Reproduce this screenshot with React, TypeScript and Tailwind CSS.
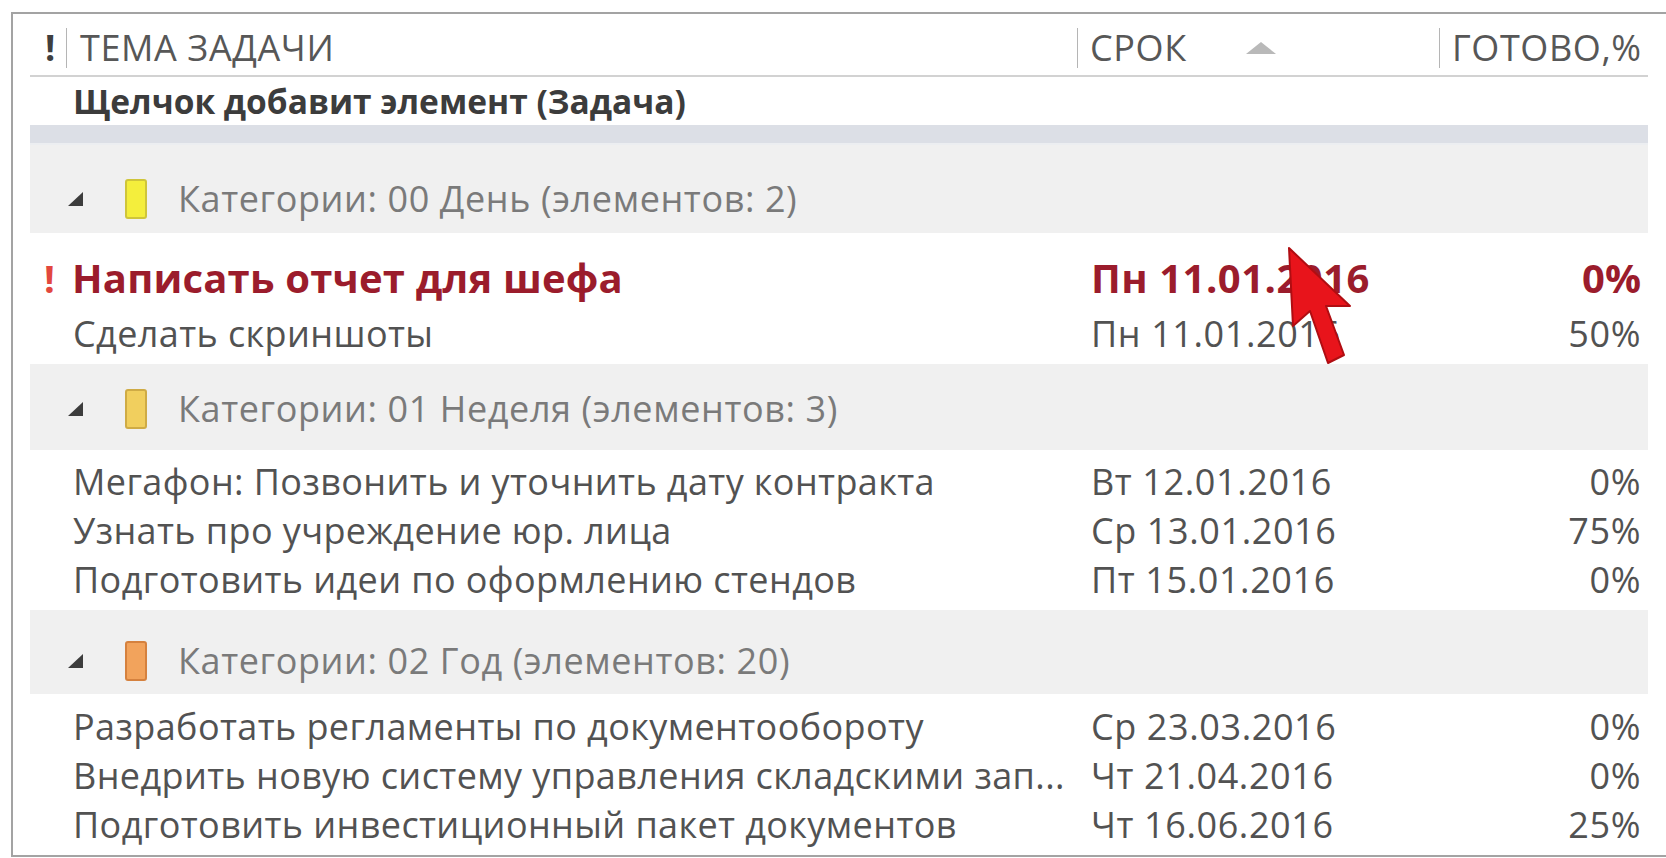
import React from "react";

type Task = { subject: string; due: string; done: string };

const groupDay: Task[] = [{ subject: "Сделать скриншоты", due: "Пн 11.01.2016", done: "50%" }];

const groupWeek: Task[] = [
  { subject: "Мегафон: Позвонить и уточнить дату контракта", due: "Вт 12.01.2016", done: "0%" },
  { subject: "Узнать про учреждение юр. лица", due: "Ср 13.01.2016", done: "75%" },
  { subject: "Подготовить идеи по оформлению стендов", due: "Пт 15.01.2016", done: "0%" },
];

const groupYear: Task[] = [
  { subject: "Разработать регламенты по документообороту", due: "Ср 23.03.2016", done: "0%" },
  { subject: "Внедрить новую систему управления складскими зап...", due: "Чт 21.04.2016", done: "0%" },
  { subject: "Подготовить инвестиционный пакет документов", due: "Чт 16.06.2016", done: "25%" },
];

function Collapse() {
  return (
    <svg width="18" height="18" viewBox="0 0 18 18" className="shrink-0">
      <polygon points="17,2 17,16 2,16" fill="#3c3c3c" />
    </svg>
  );
}

function GroupHeader({
  label,
  swatch,
  border,
  box,
}: {
  label: string;
  swatch: string;
  border: string;
  box: string;
}) {
  return (
    <div className={`ml-[17px] w-[1618px] bg-[#f0f0f0] flex items-end ${box}`}>
      <div className="flex items-center h-[49px]">
        <div className="ml-[36px]">
          <Collapse />
        </div>
        <div
          className="ml-[41px] w-[22px] h-[40px] rounded-[3px] border-2"
          style={{ backgroundColor: swatch, borderColor: border }}
        />
        <span className="ml-[31px] text-[36px] tracking-[0.6px] leading-[49px] text-[#7a7a7a] whitespace-nowrap">
          {label}
        </span>
      </div>
    </div>
  );
}

function TaskRow({ t }: { t: Task }) {
  return (
    <div className="flex items-center h-[49px] text-[36px] tracking-[0.6px] leading-[49px] text-[#525252] whitespace-nowrap">
      <div className="w-[53px] shrink-0" />
      <div className="w-[1011px] shrink-0 pl-[7px] tracking-[0.4px]">{t.subject}</div>
      <div className="w-[362px] shrink-0 pl-[14px]">{t.due}</div>
      <div className="w-[209px] shrink-0 pr-[7px] text-right">{t.done}</div>
    </div>
  );
}

export default function App() {
  return (
    <div className="w-[1666px] h-[858px] bg-white overflow-hidden font-['Open_Sans','Noto_Sans',sans-serif] relative">
      <div className="ml-[11px] mt-[12px] h-[845px] border-l-2 border-t-2 border-b-2 border-[#a3a3a3]">
        {/* column headers */}
        <div className="h-[61px] pt-[6px] flex items-center text-[36px] tracking-[0.6px] leading-[49px] text-[#575757] whitespace-nowrap">
          <div className="w-[53px] shrink-0 pl-[32px] font-bold text-[#3f3f3f]">!</div>
          <div className="w-[1011px] shrink-0 flex items-center">
            <div className="w-px h-[40px] bg-[#b5b5b5]" />
            <span className="ml-[13px]">ТЕМА ЗАДАЧИ</span>
          </div>
          <div className="w-[362px] shrink-0 flex items-center">
            <div className="w-px h-[40px] bg-[#b5b5b5]" />
            <span className="ml-[12px] w-[156px]">СРОК</span>
            <svg width="30" height="12" viewBox="0 0 30 12">
              <polygon points="15,0 30,12 0,12" fill="#b9b9b9" />
            </svg>
          </div>
          <div className="w-[209px] shrink-0 flex items-center">
            <div className="w-px h-[40px] bg-[#b5b5b5]" />
            <span className="ml-[12px]">ГОТОВО,%</span>
          </div>
        </div>
        <div className="ml-[17px] w-[1618px] h-[2px] bg-[#d2d2d2]" />

        {/* new item prompt */}
        <div className="h-[48px] flex items-center pl-[60px] text-[33.5px] leading-[48px] font-bold text-[#3c3c3c] whitespace-nowrap">
          Щелчок добавит элемент (Задача)
        </div>
        <div className="ml-[17px] w-[1618px] h-[20px] bg-[#dcdfe6] border-b-2 border-[#eceef1]" />

        <GroupHeader
          label="Категории: 00 День (элементов: 2)"
          swatch="#f4ee3c"
          border="#cfc53a"
          box="h-[88px] pb-[10px]"
        />

        {/* overdue high priority task */}
        <div className="flex items-center h-[74px] pt-[16px] whitespace-nowrap font-bold leading-[56px] text-[#9b1c2c]">
          <div className="w-[53px] shrink-0 pl-[31px] text-[38px] text-[#e2473e]">!</div>
          <div className="w-[1011px] shrink-0 pl-[6px] text-[40px] tracking-[0.2px]">Написать отчет для шефа</div>
          <div className="w-[362px] shrink-0 pl-[14px] text-[40px] tracking-[0.5px]">Пн 11.01.2016</div>
          <div className="w-[209px] shrink-0 pr-[7px] text-right text-[40px]">0%</div>
        </div>
        <div className="h-[2px]" />
        {groupDay.map((t) => (
          <TaskRow key={t.subject} t={t} />
        ))}
        <div className="h-[6px]" />

        <GroupHeader
          label="Категории: 01 Неделя (элементов: 3)"
          swatch="#f1cf5e"
          border="#cfab45"
          box="h-[86px] pb-[17px]"
        />
        <div className="h-[7px]" />
        {groupWeek.map((t) => (
          <TaskRow key={t.subject} t={t} />
        ))}
        <div className="h-[6px]" />

        <GroupHeader
          label="Категории: 02 Год (элементов: 20)"
          swatch="#f2a35c"
          border="#d5813e"
          box="h-[84px] pb-[9px]"
        />
        <div className="h-[8px]" />
        {groupYear.map((t) => (
          <TaskRow key={t.subject} t={t} />
        ))}
      </div>

      {/* mouse pointer */}
      <svg
        width="66"
        height="124"
        viewBox="0 0 66 124"
        className="absolute left-[1287px] top-[246px]"
      >
        <polygon
          points="2,2 6,80 23,65 41,117 57,109 39,60 63,60"
          fill="#e8141b"
          stroke="#b00d12"
          strokeWidth="2"
          strokeLinejoin="round"
        />
      </svg>
    </div>
  );
}
